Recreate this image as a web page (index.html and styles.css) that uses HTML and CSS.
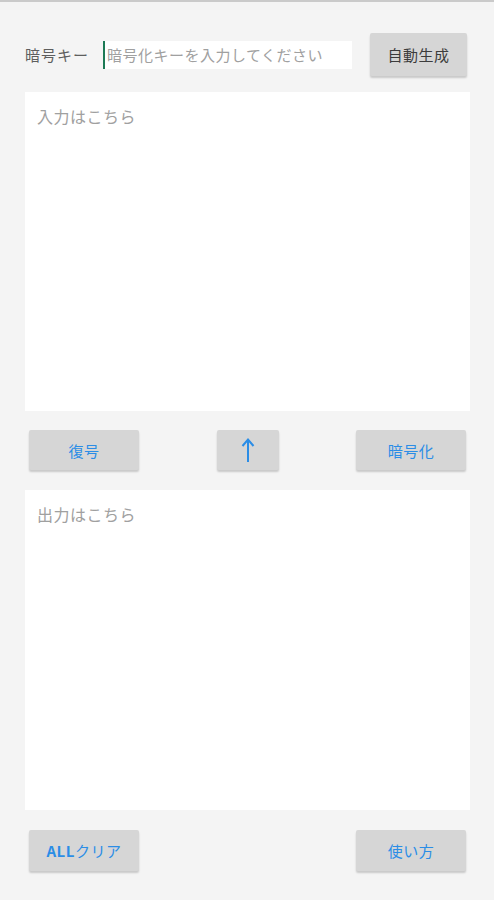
FILE: index.html
```html
<!DOCTYPE html>
<html lang="ja">
<head>
    <meta charset="UTF-8">
    <meta name="viewport" content="width=device-width, initial-scale=1.0">
    <title>暗号化ツール</title>
    <link rel="stylesheet" href="styles.css">
</head>
<body>
    <div class="app">
        <div class="key-row">
            <label class="key-label" for="key">暗号キー</label>
            <input type="text" id="key" class="key-input" placeholder="暗号化キーを入力してください">
            <button class="btn btn-dark">自動生成</button>
        </div>

        <textarea class="text-box" placeholder="入力はこちら"></textarea>

        <div class="btn-row">
            <button class="btn btn-wide">復号</button>
            <button class="btn btn-arrow" aria-label="入れ替え">
                <svg width="14" height="26" viewBox="0 0 14 26">
                    <path d="M7 25 V3 M1.5 9 L7 2.5 L12.5 9" fill="none" stroke="#2b8de6" stroke-width="2"/>
                </svg>
            </button>
            <button class="btn btn-wide">暗号化</button>
        </div>

        <textarea class="text-box" placeholder="出力はこちら"></textarea>

        <div class="btn-row btn-row-bottom">
            <button class="btn btn-wide"><b>ALL</b>クリア</button>
            <button class="btn btn-wide">使い方</button>
        </div>
    </div>
</body>
</html>
```

FILE: styles.css
```css
* {
    margin: 0;
    padding: 0;
    box-sizing: border-box;
}

body {
    font-family: "Noto Sans CJK JP", "Noto Sans", sans-serif;
    background: #f4f4f4;
    border-top: 2px solid #cacaca;
    height: 100vh;
}

.app {
    padding: 0 24px 0 25px;
}

.key-row {
    display: flex;
    align-items: center;
    margin-top: 31px;
    height: 43px;
}

.key-label {
    font-size: 15px;
    letter-spacing: 1px;
    color: #5e5e5e;
    width: 78px;
}

.key-input {
    width: 249px;
    height: 28px;
    border: none;
    background: #fff;
    font-family: inherit;
    font-size: 15px;
    letter-spacing: 0.5px;
    padding-left: 2px;
    color: #333;
    border-left: 2px solid #1d7a55;
    outline: none;
}

.key-input::placeholder {
    color: #a0a0a0;
}

.btn {
    border: none;
    background: #d6d6d6;
    font-family: inherit;
    font-size: 15px;
    color: #2b8de6;
    border-radius: 2px;
    box-shadow: 0 2px 2px rgba(0, 0, 0, 0.18);
    cursor: pointer;
}

.btn b {
    font-weight: bold;
}

.btn-dark {
    margin-left: 18px;
    width: 97px;
    height: 43px;
    color: #3c3c3c;
    letter-spacing: 0.5px;
}

.text-box {
    display: block;
    width: 100%;
    border: none;
    background: #fff;
    resize: none;
    outline: none;
    font-family: inherit;
    font-size: 16px;
    letter-spacing: 0.5px;
    padding: 12px 12px;
    color: #333;
}

.text-box::placeholder {
    color: #a0a0a0;
}

.app > .text-box:nth-of-type(1) {
    margin-top: 16px;
    height: 319px;
}

.app > .text-box:nth-of-type(2) {
    height: 320px;
}

.btn-row {
    display: flex;
    justify-content: space-between;
    align-items: center;
    padding: 0 4px;
    margin: 19px 0 20px;
    height: 40px;
}

.btn-row-bottom {
    margin: 20px 0 0;
    height: 41px;
}

.btn-wide {
    width: 110px;
    height: 100%;
    letter-spacing: 0.5px;
}

.btn-arrow {
    width: 62px;
    height: 100%;
    display: flex;
    align-items: center;
    justify-content: center;
}
```
